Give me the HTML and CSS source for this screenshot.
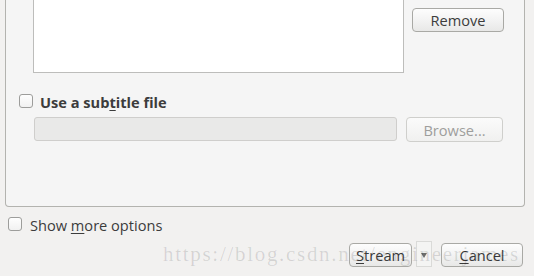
FILE: index.html
```html
<!DOCTYPE html>
<html>
<head>
<meta charset="utf-8">
<link rel="stylesheet" href="styles.css">
</head>
<body>
<div class="window">
  <div class="panel">
    <div class="row-top">
      <div class="listbox"></div>
      <div class="btn remove">Remove</div>
    </div>
    <div class="check-row sub">
      <span class="check"></span>
      <span class="label bold">Use a sub<u>t</u>itle file</span>
    </div>
    <div class="file-row">
      <div class="field"></div>
      <div class="btn browse disabled">Browse...</div>
    </div>
  </div>
  <div class="check-row more">
    <span class="check"></span>
    <span class="label">Show <u>m</u>ore options</span>
  </div>
  <div class="actions">
    <div class="btn stream"><span><u>S</u>tream</span></div>
    <div class="drop"><span class="arrow"></span></div>
    <div class="btn cancel"><span><u>C</u>ancel</span></div>
  </div>
  <div class="watermark">https://blog.csdn.net/engineerjames</div>
</div>
</body>
</html>
```
FILE: styles.css
```css
html, body {
  margin: 0;
  padding: 0;
}
body {
  background: #f2f1f0;
  font-family: "Open Sans", "Liberation Sans", sans-serif;
  font-size: 14.6px;
  color: #3c3c3c;
}
.window {
  position: relative;
  width: 534px;
  height: 276px;
  overflow: hidden;
}
.panel {
  box-sizing: border-box;
  margin-left: 5px;
  width: 520px;
  height: 207px;
  background: #f5f5f5;
  border: 1px solid #b3b3af;
  border-top: none;
  border-radius: 0 0 4px 4px;
}
.row-top {
  display: flex;
  align-items: flex-start;
  margin-left: 27px;
  gap: 8px;
}
.listbox {
  box-sizing: border-box;
  width: 371px;
  height: 73px;
  background: #ffffff;
  border: 1px solid #bdbdbb;
  border-top: none;
}
.btn {
  box-sizing: border-box;
  display: flex;
  align-items: center;
  justify-content: center;
  height: 24px;
  border: 1px solid #a9a9a5;
  border-radius: 4px;
  background: linear-gradient(#fdfdfd, #f3f3f3 50%, #e8e8e7);
  color: #3c3c3c;
  line-height: 18px;
}
.remove {
  width: 92px;
  margin-top: 8px;
}
.check-row {
  display: flex;
  align-items: center;
  height: 18px;
  line-height: 18px;
}
.check-row.sub {
  margin-top: 19px;
  padding-left: 13px;
  gap: 7px;
}
.check-row .label {
  position: relative;
  top: 1px;
}
.check {
  box-sizing: border-box;
  width: 14px;
  height: 14px;
  border: 1px solid #9d9d9b;
  border-radius: 3px;
  background: linear-gradient(#fefefe, #f1f1f1);
  flex: none;
}
.bold {
  font-weight: 700;
}
u {
  text-decoration: underline;
  text-underline-offset: 2px;
}
.file-row {
  display: flex;
  align-items: flex-start;
  margin-left: 28px;
  margin-top: 7px;
  gap: 9px;
}
.field {
  box-sizing: border-box;
  width: 363px;
  height: 24px;
  background: #e9e9e8;
  border: 1px solid #cfcecc;
  border-radius: 3px;
}
.browse {
  width: 97px;
  height: 25px;
}
.btn.disabled {
  border-color: #cfcfcc;
  background: linear-gradient(#fbfbfb, #f0f0ef);
  color: #9e9e9c;
}
.check-row.more {
  margin-top: 8px;
  padding-left: 8px;
  gap: 8px;
}
.actions {
  display: flex;
  justify-content: flex-end;
  align-items: flex-start;
  margin-top: 8px;
  padding-right: 11px;
}
.stream {
  width: 63px;
  margin-top: 2px;
}
.drop {
  box-sizing: border-box;
  display: flex;
  align-items: center;
  justify-content: center;
  width: 16px;
  height: 26px;
  margin-left: 4px;
  border: 1px solid #dadad8;
  background: #f4f4f3;
}
.arrow {
  width: 0;
  height: 0;
  border-left: 3.5px solid transparent;
  border-right: 3.5px solid transparent;
  border-top: 5px solid #6d6d6b;
  margin-top: 2px;
}
.cancel {
  width: 82px;
  margin-left: 9px;
  margin-top: 2px;
}
.watermark {
  position: absolute;
  left: 163px;
  top: 244px;
  font-family: "Liberation Serif", serif;
  font-size: 21px;
  line-height: 21px;
  letter-spacing: 1.7px;
  color: rgba(0, 0, 0, 0.12);
  white-space: nowrap;
  pointer-events: none;
}
```
